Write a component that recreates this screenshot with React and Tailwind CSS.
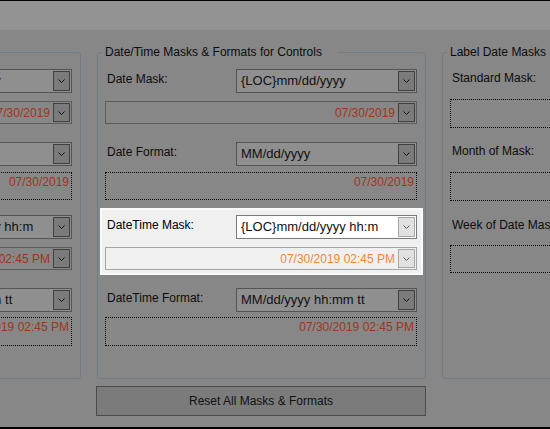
import React from "react";

const Chevron = () => (
  <svg width="7" height="4" viewBox="0 0 7 4" className="block">
    <polyline points="0.5,0.5 3.5,3.5 6.5,0.5" fill="none" stroke="currentColor" strokeWidth="1" />
  </svg>
);

const DropButton = ({ lit, tall }) => (
  <div
    className={`ml-auto mr-px flex w-[17px] items-center justify-center border ${
      tall ? "h-[20px]" : "h-[19px]"
    } ${lit ? "border-[#a6a6a6] bg-[#e1e1e1] text-[#5a5a5a]" : "border-[#404040] bg-[#7b7b7b] text-[#111]"}`}
  >
    <Chevron />
  </div>
);

const ComboRow = ({ label, text, lit }) => (
  <div className="flex h-[24px]">
    <div className={`w-[131px] pl-[2px] pt-[3px] text-[12px] leading-[14px] ${lit ? "text-black" : "text-[#0c0c0c]"}`}>
      {label}
    </div>
    <div
      className={`flex h-[24px] w-[181px] items-center border ${
        lit ? "border-[#7a7a7a] bg-white" : "border-[#545454] bg-[#8f8f8f]"
      }`}
    >
      <span className="flex-1 whitespace-nowrap pl-[4px] text-[13px] leading-[16px] text-[#111]">{text}</span>
      <DropButton lit={lit} tall />
    </div>
  </div>
);

const ValueBox = ({ value, lit }) => (
  <div
    className={`mt-[8px] flex h-[23px] w-[312px] items-center border ${
      lit ? "border-[#a6a6a6] bg-[#f0f0f0]" : "border-[#5c5c5c]"
    }`}
  >
    <span
      className={`flex-1 whitespace-nowrap pr-[3px] text-right text-[12px] leading-[14px] ${
        lit ? "text-[#f5873a]" : "text-[#a0361a]"
      }`}
    >
      {value}
    </span>
    <DropButton lit={lit} />
  </div>
);

const DottedBox = ({ value, h = "h-[28px]", mt = "mt-[6px]" }) => (
  <div className={`${mt} ${h} w-[312px] border border-dotted border-black pr-[2px] pt-[2px] text-right text-[12px] leading-[14px] text-[#a0361a]`}>
    {value}
  </div>
);

const ControlGroup = ({ title, lit, formatText }) => (
  <fieldset className="h-[334px] w-[329px] shrink-0 rounded-[3px] border border-[#737b83] pl-[7px]">
    <legend className="ml-[-3px] pl-[3px] pr-[16px] text-[12px] leading-[14px] text-[#0c0c0c]">{title}</legend>
    <div className="pt-[10px]">
      <ComboRow label="Date Mask:" text="{LOC}mm/dd/yyyy" />
      <ValueBox value="07/30/2019" />
    </div>
    <div className="mt-[18px]">
      <ComboRow label="Date Format:" text="MM/dd/yyyy" />
      <DottedBox value="07/30/2019" />
    </div>
    <div
      className={`-ml-[5px] mt-[8px] w-[323px] border-2 pb-[3px] pl-[3px] pr-[4px] pt-[5px] ${
        lit ? "border-[#fafafa] bg-[#f0f0f0]" : "border-transparent"
      }`}
    >
      <ComboRow label="DateTime Mask:" text="{LOC}mm/dd/yyyy hh:m" lit={lit} />
      <ValueBox value="07/30/2019 02:45 PM" lit={lit} />
    </div>
    <div className="mt-[13px]">
      <ComboRow label="DateTime Format:" text={formatText} />
      <DottedBox value="07/30/2019 02:45 PM" h="h-[29px]" mt="mt-[5px]" />
    </div>
  </fieldset>
);

const LabelGroup = () => (
  <fieldset className="h-[334px] w-[329px] shrink-0 rounded-[3px] border border-[#737b83] pl-[7px]">
    <legend className="ml-[-3px] pl-[3px] pr-[16px] text-[12px] leading-[14px] text-[#0c0c0c]">Label Date Masks</legend>
    {[
      { label: "Standard Mask:", mt: "mt-[12px]", boxMt: "mt-[14px]", h: "h-[29px]" },
      { label: "Month of Mask:", mt: "mt-[16px]", boxMt: "mt-[14px]", h: "h-[29px]" },
      { label: "Week of Date Mask:", mt: "mt-[17px]", boxMt: "mt-[13px]", h: "h-[28px]" },
    ].map((row) => (
      <div key={row.label} className={row.mt}>
        <div className="pl-[2px] text-[12px] leading-[14px] text-[#0c0c0c] whitespace-nowrap">{row.label}</div>
        <div className={`${row.boxMt} ${row.h} w-[312px] border border-dotted border-black`} />
      </div>
    ))}
  </fieldset>
);

export default function App() {
  return (
    <div className="h-[429px] w-[550px] overflow-hidden bg-[#878787] font-['Liberation_Sans',Arial,sans-serif]">
      <div className="h-px bg-black" />
      <div className="h-[29px] bg-[#939393]" />
      <div className="-ml-[248px] mt-[15px] flex gap-[16px]">
        <ControlGroup title="Date/Time Masks & Formats for Editors" formatText="MM/dd/yyyy h:mm tt" />
        <ControlGroup title="Date/Time Masks & Formats for Controls" formatText="MM/dd/yyyy hh:mm tt" lit />
        <LabelGroup />
      </div>
      <button className="ml-[96px] mt-[7px] flex h-[30px] w-[330px] items-center justify-center border border-[#4c4c4c] bg-[#7b7b7b] text-[12px] leading-[14px] text-[#111]">
        Reset All Masks &amp; Formats
      </button>
      <div className="mt-[11px] h-[2px] bg-black" />
    </div>
  );
}
